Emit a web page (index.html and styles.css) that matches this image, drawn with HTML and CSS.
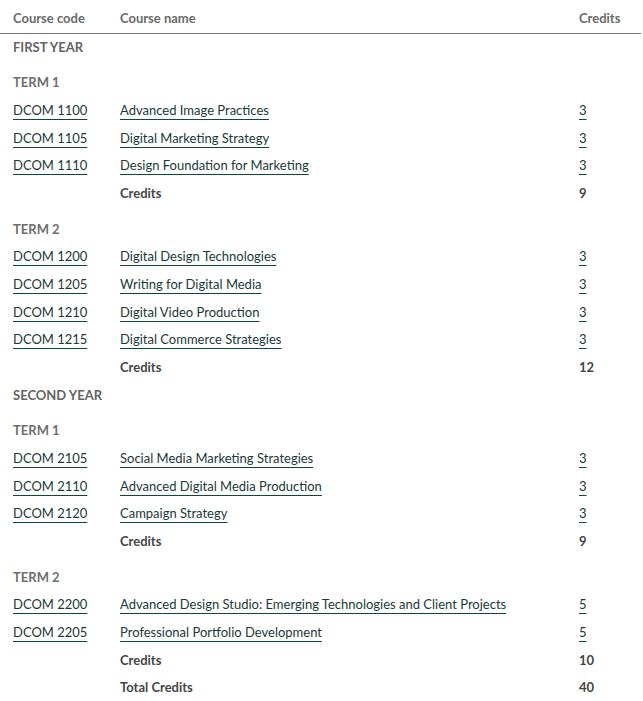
FILE: index.html
```html
<!DOCTYPE html>
<html lang="en">
<head>
<meta charset="utf-8">
<title>Program courses</title>
<link rel="stylesheet" href="styles.css">
</head>
<body>
<table class="courses">
  <colgroup>
    <col class="col-code">
    <col class="col-name">
    <col class="col-cred">
  </colgroup>
  <thead>
    <tr class="head-row">
      <th>Course code</th>
      <th>Course name</th>
      <th>Credits</th>
    </tr>
  </thead>
  <tbody>
    <tr class="year"><td colspan="3">FIRST YEAR</td></tr>
    <tr class="term"><td colspan="3">TERM 1</td></tr>
    <tr><td><a href="#">DCOM 1100</a></td><td><a href="#">Advanced Image Practices</a></td><td><a href="#">3</a></td></tr>
    <tr><td><a href="#">DCOM 1105</a></td><td><a href="#">Digital Marketing Strategy</a></td><td><a href="#">3</a></td></tr>
    <tr><td><a href="#">DCOM 1110</a></td><td><a href="#">Design Foundation for Marketing</a></td><td><a href="#">3</a></td></tr>
    <tr class="sum"><td></td><td>Credits</td><td>9</td></tr>
    <tr class="term"><td colspan="3">TERM 2</td></tr>
    <tr><td><a href="#">DCOM 1200</a></td><td><a href="#">Digital Design Technologies</a></td><td><a href="#">3</a></td></tr>
    <tr><td><a href="#">DCOM 1205</a></td><td><a href="#">Writing for Digital Media</a></td><td><a href="#">3</a></td></tr>
    <tr><td><a href="#">DCOM 1210</a></td><td><a href="#">Digital Video Production</a></td><td><a href="#">3</a></td></tr>
    <tr><td><a href="#">DCOM 1215</a></td><td><a href="#">Digital Commerce Strategies</a></td><td><a href="#">3</a></td></tr>
    <tr class="sum"><td></td><td>Credits</td><td>12</td></tr>
    <tr class="year"><td colspan="3">SECOND YEAR</td></tr>
    <tr class="term"><td colspan="3">TERM 1</td></tr>
    <tr><td><a href="#">DCOM 2105</a></td><td><a href="#">Social Media Marketing Strategies</a></td><td><a href="#">3</a></td></tr>
    <tr><td><a href="#">DCOM 2110</a></td><td><a href="#">Advanced Digital Media Production</a></td><td><a href="#">3</a></td></tr>
    <tr><td><a href="#">DCOM 2120</a></td><td><a href="#">Campaign Strategy</a></td><td><a href="#">3</a></td></tr>
    <tr class="sum"><td></td><td>Credits</td><td>9</td></tr>
    <tr class="term"><td colspan="3">TERM 2</td></tr>
    <tr><td><a href="#">DCOM 2200</a></td><td><a href="#">Advanced Design Studio: Emerging Technologies and Client Projects</a></td><td><a href="#">5</a></td></tr>
    <tr><td><a href="#">DCOM 2205</a></td><td><a href="#">Professional Portfolio Development</a></td><td><a href="#">5</a></td></tr>
    <tr class="sum"><td></td><td>Credits</td><td>10</td></tr>
    <tr class="sum"><td></td><td>Total Credits</td><td>40</td></tr>
  </tbody>
</table>
</body>
</html>
```

FILE: styles.css
```css
html, body {
  margin: 0;
  padding: 0;
  background: #ffffff;
}
body {
  font-family: "Lato", "Liberation Sans", sans-serif;
  font-size: 13px;
  color: #333333;
}
.courses {
  width: 641px;
  border-collapse: collapse;
  table-layout: fixed;
}
.col-code { width: 120px; }
.col-name { width: 459px; }
.col-cred { width: 62px; }
.courses th,
.courses td {
  padding: 3px 0;
  line-height: 21.67px;
  text-align: left;
  vertical-align: middle;
  white-space: nowrap;
}
.courses th:first-child,
.courses td:first-child {
  padding-left: 13px;
}
.head-row th {
  padding-top: 8px;
  padding-bottom: 3px;
  color: #6a6a6a;
  font-weight: 700;
  border-bottom: 1px solid #767676;
}
.year td {
  color: #646464;
  font-weight: 700;
}
.term td {
  color: #6e6e6e;
  font-weight: 700;
  padding-top: 11px;
}
.sum td {
  color: #454545;
  font-weight: 700;
}
.courses a {
  color: #1a3938;
  text-decoration: underline;
  text-decoration-color: #0a4a3a;
  text-decoration-thickness: 1px;
  text-underline-offset: 4px;
}
```
